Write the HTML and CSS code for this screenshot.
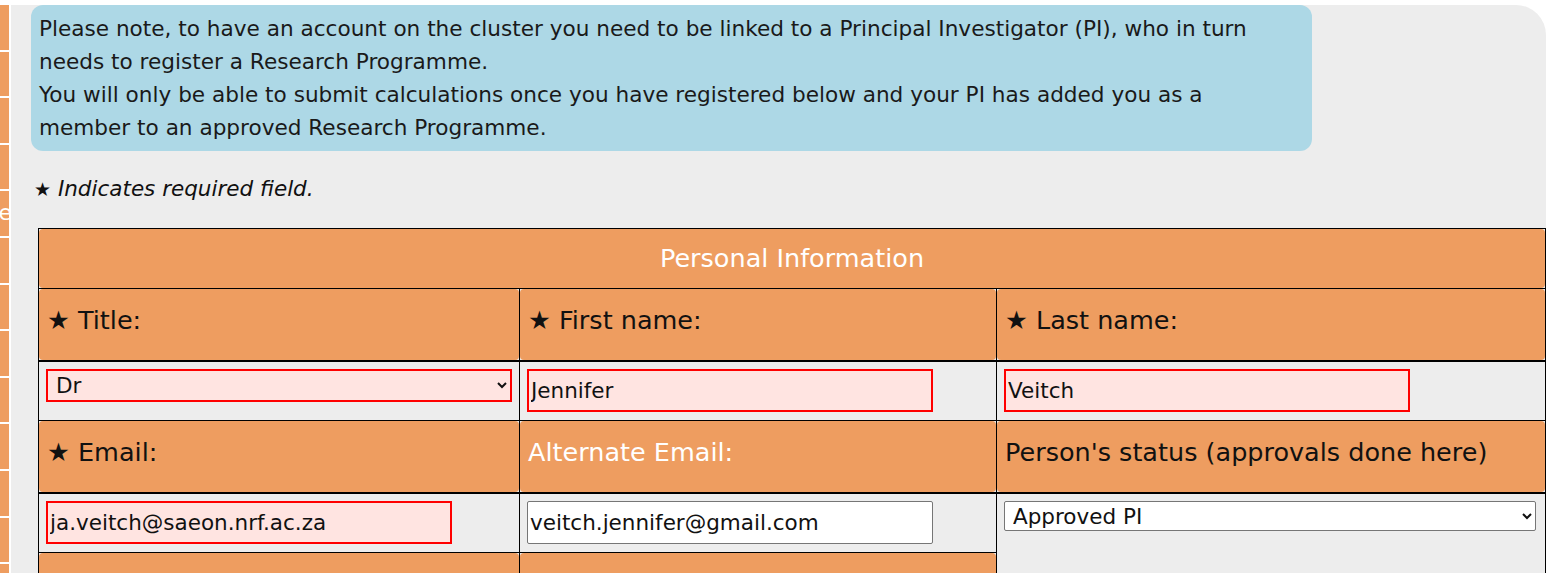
FILE: index.html
```html
<!DOCTYPE html>
<html lang="en">
<head>
<meta charset="utf-8">
<title>Register</title>
<link rel="stylesheet" href="styles.css">
</head>
<body>
<div class="layout">
  <nav class="sidebar">
    <a class="side-item"></a>
    <a class="side-item"></a>
    <a class="side-item"></a>
    <a class="side-item"></a>
    <a class="side-item"><span class="side-label">Home</span></a>
    <a class="side-item"></a>
    <a class="side-item"></a>
    <a class="side-item"></a>
    <a class="side-item"></a>
    <a class="side-item"></a>
    <a class="side-item"></a>
    <a class="side-item"></a>
    <a class="side-item"></a>
  </nav>

  <main class="panel">
    <div class="notice">
      Please note, to have an account on the cluster you need to be linked to a Principal Investigator (PI), who in turn needs to register a Research Programme.<br>
      You will only be able to submit calculations once you have registered below and your PI has added you as a member to an approved Research Programme.
    </div>

    <p class="required-note"><span class="req-star">★</span> Indicates required field.</p>

    <table class="form-table">
      <colgroup>
        <col class="col-a">
        <col class="col-b">
        <col class="col-c">
      </colgroup>
      <tr>
        <th colspan="3" class="section-head"><div class="label-box centered">Personal Information</div></th>
      </tr>
      <tr class="label-row">
        <th><div class="label-box">★ Title:</div></th>
        <th><div class="label-box">★ First name:</div></th>
        <th><div class="label-box">★ Last name:</div></th>
      </tr>
      <tr class="field-row">
        <td>
          <select class="field select-title invalid">
            <option>Dr</option>
            <option>Prof</option>
            <option>Mr</option>
            <option>Ms</option>
          </select>
        </td>
        <td><input class="field text-field invalid" type="text" value="Jennifer"></td>
        <td><input class="field text-field invalid" type="text" value="Veitch"></td>
      </tr>
      <tr class="label-row">
        <th><div class="label-box">★ Email:</div></th>
        <th><div class="label-box optional">Alternate Email:</div></th>
        <th><div class="label-box">Person's status (approvals done here)</div></th>
      </tr>
      <tr class="field-row">
        <td><input class="field text-field invalid" type="email" value="ja.veitch@saeon.nrf.ac.za"></td>
        <td><input class="field text-field" type="email" value="veitch.jennifer@gmail.com"></td>
        <td rowspan="2">
          <select class="field select-status">
            <option>Approved PI</option>
            <option>Pending</option>
            <option>Approved user</option>
          </select>
        </td>
      </tr>
      <tr class="label-row">
        <th><div class="label-box"></div></th>
        <th><div class="label-box"></div></th>
      </tr>
    </table>
  </main>

  <div class="edge"></div>
</div>
</body>
</html>
```

FILE: styles.css
```css
html, body {
  margin: 0;
  padding: 0;
  background: #ffffff;
  overflow: hidden;
}

body {
  font-family: "DejaVu Sans", "Liberation Sans", sans-serif;
  color: #111111;
}

.layout {
  display: flex;
  align-items: flex-start;
  height: 100vh;
}

/* collapsed side navigation */
.sidebar {
  width: 9px;
  flex: none;
  display: flex;
  flex-direction: column;
  gap: 2px;
  padding-top: 5px;
  overflow: hidden;
}

.side-item {
  display: flex;
  align-items: center;
  justify-content: flex-end;
  height: 44.6px;
  background: #ee9d60;
  overflow: hidden;
}

.side-label {
  color: #ffffff;
  font-size: 22px;
  white-space: nowrap;
  margin-right: -3px;
  margin-top: -2px;
}

.panel {
  flex: 1;
  margin: 5px 0 0 2px;
  min-height: 600px;
  background: #ededed;
  border-radius: 0 30px 0 0;
  padding: 0 0 0 20px;
}

.notice {
  width: 1233px;
  background: #add8e6;
  border-radius: 12px;
  padding: 7px 40px 7px 8px;
  font-size: 21.6px;
  line-height: 33px;
  color: #1a1a1a;
}

.required-note {
  margin: 24px 0 0 3px;
  font-size: 21.5px;
  font-style: italic;
  line-height: 28px;
}

.req-star {
  font-style: normal;
  font-size: 19px;
}

/* personal information form */
.form-table {
  margin: 25px 0 0 7px;
  border-collapse: collapse;
  table-layout: fixed;
  width: 1507px;
}

.col-a { width: 481px; }
.col-b { width: 477px; }
.col-c { width: 549px; }

.form-table th,
.form-table td {
  padding: 0;
  border: 1px solid #000000;
  text-align: left;
  vertical-align: top;
}

.label-row th {
  border-bottom: 2px solid #000000;
}

.label-box {
  display: flex;
  align-items: center;
  height: 71px;
  box-sizing: border-box;
  padding: 0 8px 9px;
  background: #ee9d60;
  border-radius: 4px;
  font-size: 25.5px;
  font-weight: normal;
  color: #111111;
}

.section-head .label-box {
  height: 59px;
  padding-bottom: 2px;
}

.label-box.centered {
  justify-content: center;
  color: #ffffff;
}

.label-box.optional {
  color: #ffffff;
}

.field-row td {
  padding: 7px 7px 8px;
}

.field {
  font-family: "DejaVu Sans", "Liberation Sans", sans-serif;
  font-size: 21.5px;
  color: #111111;
  box-sizing: border-box;
  margin: 0;
}

.text-field {
  display: block;
  width: 406px;
  height: 43px;
  padding: 0 2px;
  background: #ffffff;
  border: 1px solid #767676;
  border-radius: 2px;
}

.field.invalid {
  background: #ffe4e1;
  border: 2px solid #ff0000;
  border-radius: 0;
}

.select-title {
  display: block;
  width: 466px;
  height: 33px;
  padding: 0 4px;
}

.select-status {
  display: block;
  width: 532px;
  height: 30px;
  padding: 0 4px;
  background: #ffffff;
  border: 1px solid #767676;
  border-radius: 2px;
}

.edge {
  flex: none;
  width: 5px;
  height: 100vh;
  margin-left: 13px;
  background: #ee9d60;
}
```
